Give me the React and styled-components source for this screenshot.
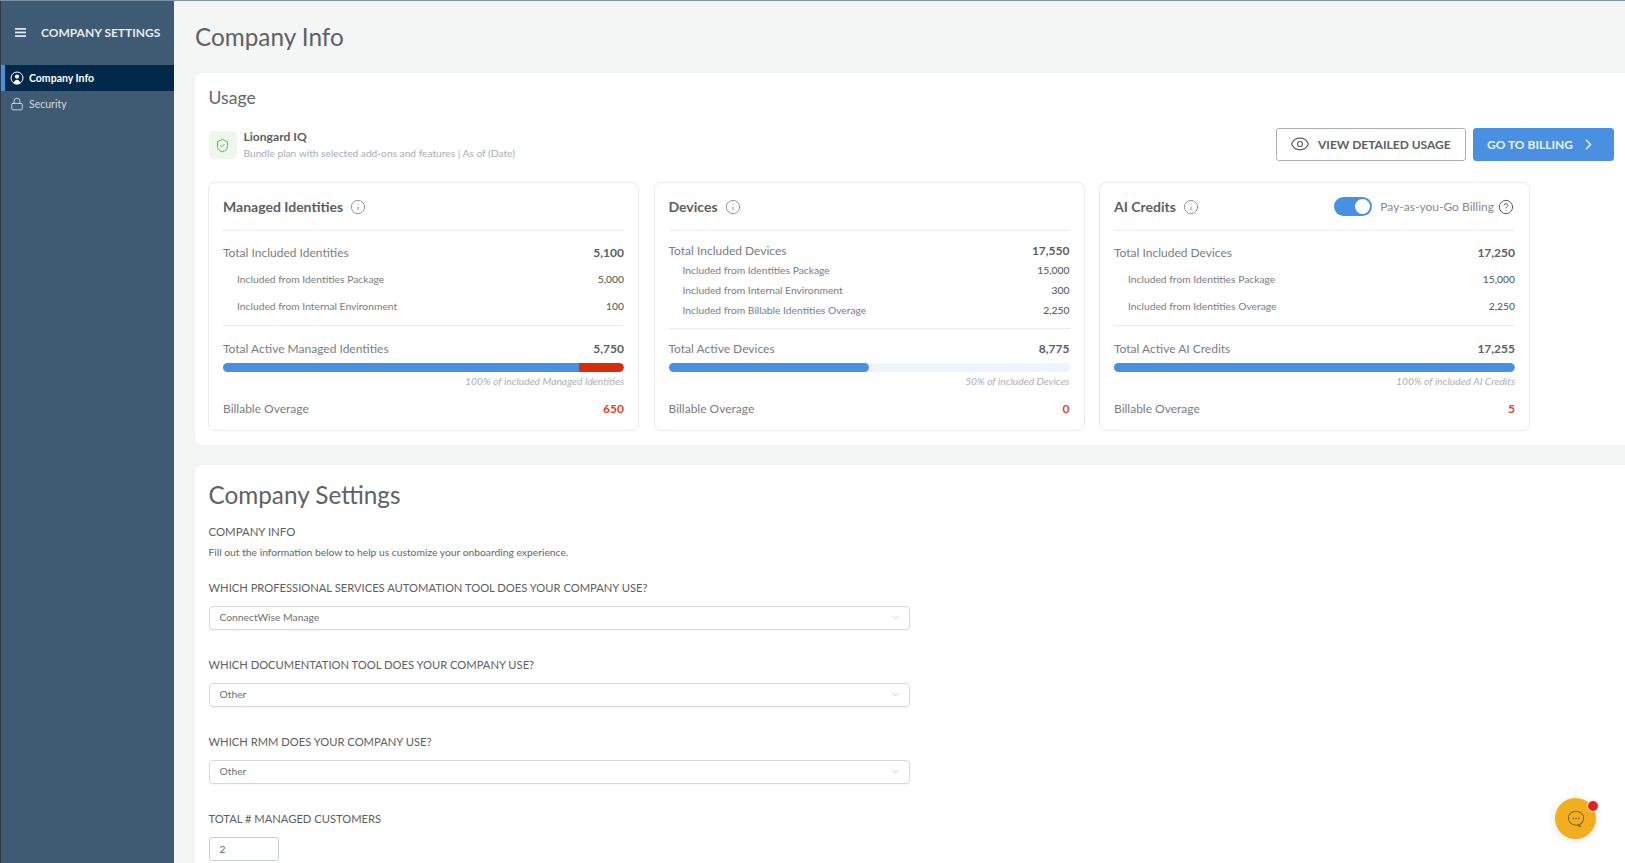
import React from "react";
import styled, { createGlobalStyle } from "styled-components";
import { Eye, ChevronRight, ChevronDown, Info, CircleHelp, Lock, ShieldCheck } from "lucide-react";

const Global = createGlobalStyle`
  html, body { margin: 0; padding: 0; height: 100%; overflow: hidden; }
  body { font-family: "Lato", "Liberation Sans", sans-serif; color: #5c5f62; background: #f4f5f5; }
  * { box-sizing: border-box; }
`;

const Shell = styled.div`
  display: flex;
  width: 1625px;
  height: 863px;
  overflow: hidden;
  border-top: 1px solid #7f93a6;
  position: relative;
`;

const Sidebar = styled.aside`
  flex: 0 0 174px;
  background: #3f5a73;
  border-left: 1px solid #2f3a45;
  display: flex;
  flex-direction: column;
`;

const SideHead = styled.div`
  height: 64px;
  padding: 0 0 2px 14px;
  display: flex;
  align-items: center;
  gap: 15px;
  color: #e6ebef;
  font-size: 12px;
  font-weight: 700;
  white-space: nowrap;
`;

const NavItem = styled.div`
  height: 26px;
  display: flex;
  align-items: center;
  gap: 5px;
  padding-left: ${(p) => (p.$active ? "5px" : "9px")};
  border-left: ${(p) => (p.$active ? "4px solid #4a90e2" : "none")};
  background: ${(p) => (p.$active ? "#03294a" : "transparent")};
  color: ${(p) => (p.$active ? "#ffffff" : "#d3dbe2")};
  font-size: 10.5px;
  font-weight: ${(p) => (p.$active ? 700 : 400)};
`;

const Main = styled.main`
  flex: 1;
  min-width: 0;
  padding-left: 21px;
  display: flex;
  flex-direction: column;
`;

const PageTitle = styled.h1`
  margin: 0;
  height: 72px;
  padding-bottom: 2px;
  display: flex;
  align-items: center;
  font-size: 24.3px;
  font-weight: 400;
  color: #5f6265;
  flex: none;
`;

const Panel = styled.section`
  flex: none;
  background: #fff;
  border-radius: 8px 0 0 8px;
  padding: ${(p) => p.$pad};
  height: ${(p) => p.$height};
  margin-bottom: ${(p) => p.$mb || 0};
`;

const UsageTitle = styled.h2`
  margin: 0 0 18px;
  font-size: 17.6px;
  line-height: 24px;
  font-weight: 400;
  color: #63666a;
`;

const PlanBar = styled.div`
  display: flex;
  justify-content: space-between;
  align-items: center;
  padding-right: 11px;
  height: 34px;
  margin-bottom: 20px;
`;

const Plan = styled.div`
  display: flex;
  align-items: center;
  gap: 7px;
`;

const PlanIcon = styled.div`
  width: 28px;
  height: 28px;
  border-radius: 5px;
  background: #eef7ec;
  color: #5cb85c;
  display: flex;
  align-items: center;
  justify-content: center;
`;

const PlanName = styled.div`
  font-size: 12.1px;
  font-weight: 700;
  line-height: 17px;
  color: #5c5f62;
`;

const PlanSub = styled.div`
  font-size: 10.2px;
  line-height: 17px;
  color: #a9adb2;
`;

const Actions = styled.div`
  display: flex;
  gap: 7px;
  margin-bottom: 2px;
`;

const Button = styled.button`
  height: 33px;
  border-radius: 3px;
  display: flex;
  align-items: center;
  font-family: inherit;
  font-size: 12px;
  font-weight: 700;
  white-space: nowrap;
  padding: 0 0 0 ${(p) => p.$left};
  width: ${(p) => p.$w};
  justify-content: flex-start;
  gap: ${(p) => p.$gap};
  border: 1px solid ${(p) => (p.$primary ? "#4a90e2" : "#aeb2b6")};
  background: ${(p) => (p.$primary ? "#4a90e2" : "#fff")};
  color: ${(p) => (p.$primary ? "#eaf3fc" : "#5c5f62")};
`;

const Cards = styled.div`
  display: grid;
  grid-template-columns: repeat(3, 431px);
  gap: 14.5px;
  margin-left: -0.5px;
`;

const Card = styled.article`
  height: 249px;
  border: 1px solid #e9ebf2;
  border-radius: 7px;
  padding: 0 14px;
  display: flex;
  flex-direction: column;
`;

const CardHead = styled.header`
  flex: none;
  height: 48px;
  display: flex;
  align-items: center;
  gap: 7px;
  border-bottom: 1px solid #e9ebf2;
`;

const CardTitle = styled.h3`
  margin: 0;
  font-size: 14px;
  font-weight: 700;
  color: #5c5f62;
`;

const HeadIcon = styled.span`
  display: inline-flex;
  color: #85898d;
`;

const Toggle = styled.span`
  width: 38px;
  height: 19px;
  border-radius: 10px;
  background: #4a90e2;
  padding: 2px;
  margin-right: 4px;
  display: flex;
  justify-content: flex-end;
  flex: none;
  &::after {
    content: "";
    width: 15px;
    height: 15px;
    border-radius: 50%;
    background: #fff;
  }
`;

const PayLabel = styled.span`
  font-size: 12px;
  color: #85898d;
  white-space: nowrap;
`;

const PayGroup = styled.div`
  margin-left: auto;
  padding-right: 1px;
  display: flex;
  align-items: center;
  gap: 4px;
`;

const Rows = styled.div`
  flex: none;
  height: ${(p) => p.$h};
  padding-top: ${(p) => p.$top};
  display: flex;
  flex-direction: column;
  gap: ${(p) => p.$gap};
  border-bottom: 1px solid #e9ebf2;
`;

const Row = styled.div`
  display: flex;
  justify-content: space-between;
  align-items: center;
  height: 18px;
  flex: none;
  padding-left: ${(p) => (p.$sub ? "14px" : 0)};
  font-size: ${(p) => (p.$sub ? "10.3px" : "12px")};
  color: #7a7d81;
`;

const Value = styled.span`
  color: ${(p) => (p.$red ? "#e8402c" : "#5c5f62")};
  font-weight: ${(p) => (p.$bold ? 700 : 500)};
`;

const Active = styled.div`
  flex: 1;
  display: flex;
  flex-direction: column;
  justify-content: flex-end;
  padding-bottom: 13px;
`;

const Track = styled.div`
  height: 9px;
  margin-top: 6px;
  border-radius: 5px;
  background: #eef4fb;
  display: flex;
  overflow: hidden;
  flex: none;
`;

const Fill = styled.div`
  height: 100%;
  background: ${(p) => (p.$red ? "#d62c0a" : "#4a90e2")};
  border-radius: ${(p) => (p.$round ? "0 5px 5px 0" : 0)};
`;

const Note = styled.div`
  text-align: right;
  font-style: italic;
  font-size: 10.3px;
  line-height: 14px;
  margin: 2px 0 11px;
  color: #aeb2b6;
`;

const SettingsTitle = styled.h2`
  margin: 0 0 12px;
  font-size: 24.3px;
  line-height: 34px;
  font-weight: 400;
  color: #5f6265;
`;

const SubHead = styled.div`
  font-size: 11.4px;
  line-height: 16px;
  color: #5c5f62;
  margin-bottom: 4px;
`;

const Help = styled.div`
  font-size: 10.3px;
  line-height: 16px;
  color: #63666a;
  margin-bottom: 19.5px;
`;

const Field = styled.div`
  margin-bottom: 27px;
`;

const Label = styled.label`
  display: block;
  font-size: 11.2px;
  line-height: 16px;
  color: #5c5f62;
  margin-bottom: 10px;
`;

const Select = styled.div`
  width: 701px;
  height: 24px;
  border: 1px solid #d5d8dc;
  border-radius: 4px;
  display: flex;
  align-items: center;
  justify-content: space-between;
  padding: 0 8px 1px 10px;
  font-size: 10.3px;
  color: #6c6f73;
  box-shadow: 0 1px 1px rgba(0, 0, 0, 0.04);
`;

const NumberBox = styled.div`
  width: 70px;
  height: 24px;
  border: 1px solid #c8ced6;
  border-radius: 3px;
  display: flex;
  align-items: center;
  padding-left: 10px;
  font-size: 10.3px;
  color: #5c5f62;
`;

const Chat = styled.div`
  position: absolute;
  left: 1555px;
  top: 797px;
  width: 41px;
  height: 41px;
  border-radius: 50%;
  background: #f3ae1f;
  box-shadow: 0 1px 8px rgba(0, 0, 0, 0.12);
  display: flex;
  align-items: center;
  justify-content: center;
  &::after {
    content: "";
    position: absolute;
    right: -3px;
    top: 2px;
    width: 10px;
    height: 10px;
    border-radius: 50%;
    background: #e21f26;
    border: 1.5px solid #fff;
  }
`;

const PersonIcon = () => (
  <svg width="14" height="14" viewBox="0 0 14 14" fill="none">
    <circle cx="7" cy="7" r="6" fill="#03294a" stroke="#fff" strokeWidth="1" />
    <circle cx="7" cy="5.6" r="2.1" fill="#fff" />
    <path d="M3.8 12.4c.3-2.4 1.6-3.7 3.2-3.7s2.9 1.3 3.2 3.7c-1 .6-2 .9-3.2.9s-2.2-.3-3.2-.9z" fill="#fff" />
  </svg>
);

const BurgerIcon = () => (
  <svg width="11" height="9" viewBox="0 0 11 9" fill="#e6ebef">
    <rect y="0" width="11" height="1.7" />
    <rect y="3.6" width="11" height="1.7" />
    <rect y="7.2" width="11" height="1.7" />
  </svg>
);

const BubbleIcon = () => (
  <svg width="20" height="20" viewBox="0 0 20 20" fill="none" stroke="#7b6a2c" strokeWidth="1.1" strokeLinejoin="round">
    <path d="M10 2.2c4.4 0 7.6 3 7.6 7 0 4-3.2 7.1-7.6 7.1h3.6l.9 1.6-2.6-1.6C6 16.6 2.4 13.3 2.4 9.2c0-4 3.2-7 7.6-7z" />
    <circle cx="7.2" cy="9.4" r=".8" fill="#7b6a2c" stroke="none" />
    <circle cx="10" cy="9.4" r=".8" fill="#7b6a2c" stroke="none" />
    <circle cx="12.8" cy="9.4" r=".8" fill="#7b6a2c" stroke="none" />
  </svg>
);

const Stat = ({ label, value, sub }) => (
  <Row $sub={sub}>
    <span>{label}</span>
    <Value $bold={!sub}>{value}</Value>
  </Row>
);

const InfoIcon = () => (
  <HeadIcon>
    <Info size={16} strokeWidth={1.3} />
  </HeadIcon>
);

const UsageCard = ({ title, extra, rows, rowsH, rowsTop, rowsGap, activeLabel, activeValue, fills, note, overage }) => (
  <Card>
    <CardHead>
      <CardTitle>{title}</CardTitle>
      <InfoIcon />
      {extra}
    </CardHead>
    <Rows $h={rowsH} $top={rowsTop} $gap={rowsGap}>
      {rows.map((r) => (
        <Stat key={r[0]} label={r[0]} value={r[1]} sub={r[2]} />
      ))}
    </Rows>
    <Active>
      <Stat label={activeLabel} value={activeValue} />
      <Track>
        {fills.map((f, i) => (
          <Fill key={i} $red={f.red} $round={i === fills.length - 1} style={{ width: `${f.w}%` }} />
        ))}
      </Track>
      <Note>{note}</Note>
      <Row>
        <span>Billable Overage</span>
        <Value $red $bold>{overage}</Value>
      </Row>
    </Active>
  </Card>
);

const SelectField = ({ label, value }) => (
  <Field>
    <Label>{label}</Label>
    <Select>
      <span>{value}</span>
      <ChevronDown size={11} strokeWidth={1.2} color="#a5a9ad" />
    </Select>
  </Field>
);

export default function App() {
  return (
    <>
      <Global />
      <Shell>
        <Sidebar>
          <SideHead>
            <BurgerIcon />
            <span>COMPANY SETTINGS</span>
          </SideHead>
          <NavItem $active>
            <PersonIcon />
            Company Info
          </NavItem>
          <NavItem>
            <Lock size={14} strokeWidth={1.4} color="#e6ebef" />
            Security
          </NavItem>
        </Sidebar>
        <Main>
          <PageTitle>Company Info</PageTitle>
          <Panel $pad="13px 0 0 13.5px" $height="372px" $mb="20px">
            <UsageTitle>Usage</UsageTitle>
            <PlanBar>
              <Plan>
                <PlanIcon>
                  <ShieldCheck size={15} strokeWidth={1.6} />
                </PlanIcon>
                <div>
                  <PlanName>Liongard IQ</PlanName>
                  <PlanSub>Bundle plan with selected add-ons and features | As of (Date)</PlanSub>
                </div>
              </Plan>
              <Actions>
                <Button $w="190px" $gap="8px" $left="13px">
                  <Eye size={20} strokeWidth={1.4} />
                  VIEW DETAILED USAGE
                </Button>
                <Button $primary $w="141px" $gap="7px" $left="13px">
                  GO TO BILLING
                  <ChevronRight size={17} strokeWidth={2} />
                </Button>
              </Actions>
            </PlanBar>
            <Cards>
              <UsageCard
                title="Managed Identities"
                rows={[
                  ["Total Included Identities", "5,100"],
                  ["Included from Identities Package", "5,000", true],
                  ["Included from Internal Environment", "100", true],
                ]}
                rowsH="95px"
                rowsTop="12.5px"
                rowsGap="8.5px"
                activeLabel="Total Active Managed Identities"
                activeValue="5,750"
                fills={[{ w: 88.7 }, { w: 11.3, red: true }]}
                note="100% of included Managed Identities"
                overage="650"
              />
              <UsageCard
                title="Devices"
                rows={[
                  ["Total Included Devices", "17,550"],
                  ["Included from Identities Package", "15,000", true],
                  ["Included from Internal Environment", "300", true],
                  ["Included from Billable Identities Overage", "2,250", true],
                ]}
                rowsH="98px"
                rowsTop="10px"
                rowsGap="2px"
                activeLabel="Total Active Devices"
                activeValue="8,775"
                fills={[{ w: 50 }]}
                note="50% of included Devices"
                overage="0"
              />
              <UsageCard
                title="AI Credits"
                extra={
                  <PayGroup>
                    <Toggle />
                    <PayLabel>Pay-as-you-Go Billing</PayLabel>
                    <HeadIcon>
                      <CircleHelp size={16} strokeWidth={1.5} color="#5c5f62" />
                    </HeadIcon>
                  </PayGroup>
                }
                rows={[
                  ["Total Included Devices", "17,250"],
                  ["Included from Identities Package", "15,000", true],
                  ["Included from Identities Overage", "2,250", true],
                ]}
                rowsH="95px"
                rowsTop="12.5px"
                rowsGap="8.5px"
                activeLabel="Total Active AI Credits"
                activeValue="17,255"
                fills={[{ w: 100 }]}
                note="100% of included AI Credits"
                overage="5"
              />
            </Cards>
          </Panel>
          <Panel $pad="13px 0 0 13.5px" $height="420px">
            <SettingsTitle>Company Settings</SettingsTitle>
            <SubHead>COMPANY INFO</SubHead>
            <Help>Fill out the information below to help us customize your onboarding experience.</Help>
            <SelectField label="WHICH PROFESSIONAL SERVICES AUTOMATION TOOL DOES YOUR COMPANY USE?" value="ConnectWise Manage" />
            <SelectField label="WHICH DOCUMENTATION TOOL DOES YOUR COMPANY USE?" value="Other" />
            <SelectField label="WHICH RMM DOES YOUR COMPANY USE?" value="Other" />
            <Label>TOTAL # MANAGED CUSTOMERS</Label>
            <NumberBox>2</NumberBox>
          </Panel>
        </Main>
        <Chat>
          <BubbleIcon />
        </Chat>
      </Shell>
    </>
  );
}
